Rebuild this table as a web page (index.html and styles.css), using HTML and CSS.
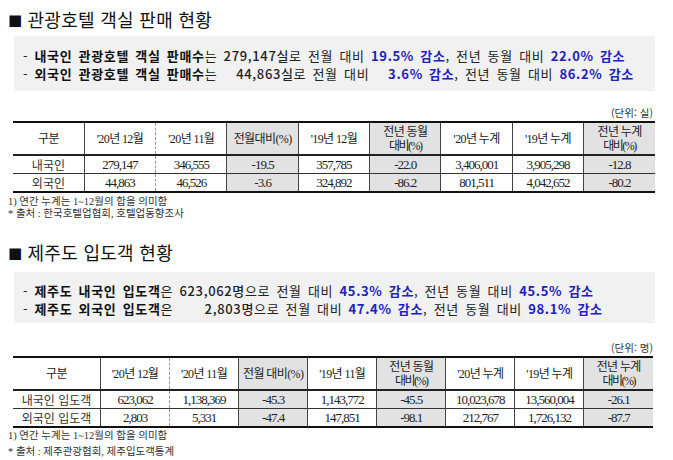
FILE: index.html
```html
<!DOCTYPE html>
<html lang="ko">
<head>
<meta charset="utf-8">
<title>관광호텔 객실 판매 현황</title>
<link rel="stylesheet" href="styles.css">
</head>
<body>
<section class="sec sec1">
  <h2 class="title"><span class="sq">■</span>관광호텔 객실 판매 현황</h2>
  <div class="summary">
    <p>- <b>내국인 관광호텔 객실 판매수</b>는 <span class="num">279,147실</span>로 전월 대비 <b class="blue">19.5% 감소</b>, 전년 동월 대비 <b class="blue">22.0% 감소</b></p>
    <p>- <b>외국인 관광호텔 객실 판매수</b>는 <span class="num">  44,863실</span>로 전월 대비 <b class="blue">  3.6% 감소</b>, 전년 동월 대비 <b class="blue">86.2% 감소</b></p>
  </div>
  <div class="unit">(단위: 실)</div>
  <table class="tbl t1">
    <thead>
      <tr>
        <th>구분</th>
        <th class="dot">'20년 12월</th>
        <th>'20년 11월</th>
        <th class="g">전월대비(%)</th>
        <th>'19년 12월</th>
        <th class="g two">전년 동월<br><span class="cond">대비(%)</span></th>
        <th>'20년 누계</th>
        <th>'19년 누계</th>
        <th class="g two">전년 누계<br><span class="cond">대비(%)</span></th>
      </tr>
    </thead>
    <tbody>
      <tr>
        <td class="lab">내국인</td>
        <td class="dot">279,147</td>
        <td>346,555</td>
        <td class="g">-19.5</td>
        <td>357,785</td>
        <td class="g">-22.0</td>
        <td>3,406,001</td>
        <td>3,905,298</td>
        <td class="g">-12.8</td>
      </tr>
      <tr>
        <td class="lab">외국인</td>
        <td class="dot">44,863</td>
        <td>46,526</td>
        <td class="g">-3.6</td>
        <td>324,892</td>
        <td class="g">-86.2</td>
        <td>801,511</td>
        <td>4,042,652</td>
        <td class="g">-80.2</td>
      </tr>
    </tbody>
  </table>
  <div class="notes">
    <p>1) 연간 누계는 1~12월의 합을 의미함</p>
    <p>* 출처 : 한국호텔업협회, 호텔업동향조사</p>
  </div>
</section>

<section class="sec sec2">
  <h2 class="title"><span class="sq">■</span>제주도 입도객 현황</h2>
  <div class="summary">
    <p>- <b>제주도 내국인 입도객</b>은 <span class="num">623,062명</span>으로 전월 대비 <b class="blue">45.3% 감소</b>, 전년 동월 대비 <b class="blue">45.5% 감소</b></p>
    <p>- <b>제주도 외국인 입도객</b>은 <span class="num">    2,803명</span>으로 전월 대비 <b class="blue">47.4% 감소</b>, 전년 동월 대비 <b class="blue">98.1% 감소</b></p>
  </div>
  <div class="unit">(단위: 명)</div>
  <table class="tbl t2">
    <thead>
      <tr>
        <th class="c1">구분</th>
        <th class="dot">'20년 12월</th>
        <th>'20년 11월</th>
        <th class="g">전월 대비(%)</th>
        <th>'19년 11월</th>
        <th class="g two">전년 동월<br><span class="cond">대비(%)</span></th>
        <th>'20년 누계</th>
        <th>'19년 누계</th>
        <th class="g two">전년 누계<br><span class="cond">대비(%)</span></th>
      </tr>
    </thead>
    <tbody>
      <tr>
        <td class="lab">내국인 입도객</td>
        <td class="dot">623,062</td>
        <td>1,138,369</td>
        <td class="g">-45.3</td>
        <td>1,143,772</td>
        <td class="g">-45.5</td>
        <td>10,023,678</td>
        <td>13,560,004</td>
        <td class="g">-26.1</td>
      </tr>
      <tr>
        <td class="lab">외국인 입도객</td>
        <td class="dot">2,803</td>
        <td>5,331</td>
        <td class="g">-47.4</td>
        <td>147,851</td>
        <td class="g">-98.1</td>
        <td>212,767</td>
        <td>1,726,132</td>
        <td class="g">-87.7</td>
      </tr>
    </tbody>
  </table>
  <div class="notes">
    <p>1) 연간 누계는 1~12월의 합을 의미함</p>
    <p>* 출처 : 제주관광협회, 제주입도객통계</p>
  </div>
</section>
</body>
</html>
```

FILE: styles.css
```css
html, body {
  margin: 0;
  padding: 0;
  background: #ffffff;
}

body {
  width: 673px;
  font-family: "Noto Sans CJK KR", "Noto Sans", sans-serif;
  color: #111;
}

.sec {
  display: flex;
  flex-direction: column;
  padding: 0 18px 0 8px;
}

.sec1 {
  padding-top: 8px;
}

.sec2 {
  padding-top: 21px;
}

.title {
  margin: 0;
  font-size: 18px;
  font-weight: 400;
  line-height: 22px;
  letter-spacing: 0.3px;
  color: #111;
}

.sq {
  font-family: "DejaVu Sans", sans-serif;
  font-size: 15px;
  margin-right: 5px;
  position: relative;
  top: -2px;
}

.summary {
  margin: 3px 0 0 6px;
  background: #f1f1f1;
  padding: 11px 0 8px 9px;
}

.sec2 .summary {
  margin-top: 6px;
  padding-top: 10px;
  padding-bottom: 5px;
}

.summary p {
  margin: 0;
  font-size: 13px;
  line-height: 18px;
  letter-spacing: 0.65px;
  word-spacing: 2px;
  white-space: pre;
  color: #222;
}

.summary b {
  font-weight: 700;
  color: #111;
}

.summary .num {
  font-weight: 500;
}

.summary .blue {
  color: #2222b8;
}

.unit {
  margin-top: 15px;
  text-align: right;
  font-size: 10.5px;
  line-height: 14px;
  color: #333;
  padding-right: 2px;
}

.sec2 .unit {
  margin-top: 18px;
}

.tbl {
  margin: 1px 0 0 5px;
  width: 642px;
  border-collapse: collapse;
  table-layout: fixed;
  font-family: "Liberation Serif", "Noto Sans CJK KR", serif;
  color: #222;
  border-top: 2.5px solid #111;
  border-bottom: 2.5px solid #111;
}

.tbl th,
.tbl td {
  text-align: center;
  padding: 0;
  border-left: 1px solid #444;
  white-space: nowrap;
}

.tbl th:first-child,
.tbl td:first-child {
  border-left: none;
}

.tbl th {
  font-weight: 400;
  font-size: 12px;
  letter-spacing: -0.6px;
  height: 31px;
  line-height: 14px;
  border-bottom: 2px solid #222;
}

.tbl td {
  font-size: 13px;
  letter-spacing: -1px;
  height: 17px;
  line-height: 17px;
  border-top: 1px solid #333;
}

.tbl tbody tr:first-child td {
  border-top: none;
}

.tbl .lab {
  font-family: "Noto Sans CJK KR", sans-serif;
  font-size: 12px;
  letter-spacing: 0;
  color: #333;
}

.tbl .dot + th,
.tbl .dot + td {
  border-left: 1px dashed #999;
}

.tbl .g {
  background: #e2e2e2;
}

.tbl .cond {
  letter-spacing: -1.5px;
}

.t2 {
  width: 640px;
}

.t2 .c1 {
  width: 87px;
}

.notes {
  margin-top: 3px;
  font-family: "Liberation Serif", "Noto Sans CJK KR", serif;
  font-size: 10.5px;
  color: #333;
}

.notes p {
  margin: 0;
  line-height: 12px;
}

.sec2 .notes {
  margin-top: 0;
}

.sec2 .notes p {
  line-height: 16px;
}
```
